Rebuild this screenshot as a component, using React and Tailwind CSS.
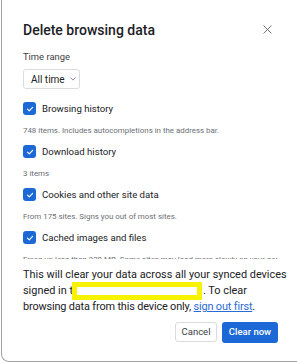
import React from "react";

function Check() {
  return (
    <span className="flex h-[13px] w-[13px] shrink-0 items-center justify-center rounded-[3px] bg-[#1b68d6]">
      <svg width="8" height="8" viewBox="0 0 12 12" fill="none">
        <path d="M2.2 6.3 L4.9 8.9 L9.9 3.4" stroke="white" strokeWidth="1.7" strokeLinecap="round" strokeLinejoin="round" />
      </svg>
    </span>
  );
}

function Item({ label, desc }) {
  return (
    <div className="flex flex-col">
      <div className="flex h-[13px] items-center gap-[6px]">
        <Check />
        <span className="whitespace-nowrap text-[9.6px] leading-[13px] text-[#202124]">{label}</span>
      </div>
      <div className="mb-[8px] mt-[10px] h-[12px] whitespace-nowrap text-[7.9px] leading-[12px] text-[#6b6f74]">{desc}</div>
    </div>
  );
}

export default function App() {
  return (
    <div className="h-[364px] w-[297px] overflow-hidden bg-white" style={{ fontFamily: 'Roboto, Arial, sans-serif' }}>
      <div className="ml-px flex h-[362px] w-[320px] flex-col rounded-bl-[8px] border-b border-l border-[#a3a3a3] bg-white">
        <div className="flex h-[40px] w-[295px] items-end justify-between pl-[21px] pr-[25px]">
          <span className="h-[20px] text-[14px] font-medium leading-[20px] text-[#202124]">Delete browsing data</span>
          <svg width="9" height="9" viewBox="0 0 10 10" className="mb-[6px]">
            <path d="M0.6 0.6 L9.4 9.4 M9.4 0.6 L0.6 9.4" stroke="#5f6368" strokeWidth="1" />
          </svg>
        </div>
        <div className="mt-[10px] h-[14px] pl-[21px] text-[9.4px] leading-[14px] text-[#3c4043]">Time range</div>
        <div className="mt-[5px] pl-[21px]">
          <div className="flex h-[20px] w-[57px] items-center gap-[5px] rounded-[3px] border border-[#dadce0] pl-[7px] text-[10px] text-[#202124]">
            All time
            <svg width="6" height="4" viewBox="0 0 8 5">
              <path d="M0.6 0.6 L4 4 L7.4 0.6" stroke="#5f6368" strokeWidth="1" fill="none" />
            </svg>
          </div>
        </div>
        <div className="mt-[6px] flex h-[164px] w-[276px] overflow-hidden">
          <div className="flex flex-1 flex-col pl-[21px] pt-[7px]">
            <Item label="Browsing history" desc="748 items. Includes autocompletions in the address bar." />
            <Item label="Download history" desc="3 items" />
            <Item label="Cookies and other site data" desc="From 175 sites. Signs you out of most sites." />
            <Item label="Cached images and files" desc="Frees up less than 320 MB. Some sites may load more slowly on your next visit." />
          </div>
          <div className="flex w-[10px] shrink-0 flex-col items-center pt-[8px]">
            <svg width="5" height="3" viewBox="0 0 6 4"><path d="M0 4 L3 0 L6 4 Z" fill="#a0a0a0" /></svg>
            <div className="mt-[4px] h-[62px] w-[5px] rounded-full bg-[#8d8d8d]" />
            <div className="flex-1" />
            <svg width="5" height="3" viewBox="0 0 6 4" className="mb-[7px]"><path d="M0 0 L3 4 L6 0 Z" fill="#8d8d8d" /></svg>
          </div>
        </div>
        <div className="mt-[9px] w-[295px] pl-[21px] text-[10.9px] leading-[14px] text-[#202124]">
          <div className="whitespace-nowrap">This will clear your data across all your synced devices</div>
          <div className="flex items-center whitespace-nowrap">
            <span>signed in t</span>
            <span className="-ml-px flex h-[18px] w-[130px] items-center bg-[#f7f300] px-[5px]">
              <span className="h-[8px] w-full bg-white" />
            </span>
            <span className="ml-px">. To clear</span>
          </div>
          <div className="whitespace-nowrap tracking-[-0.15px]">
            browsing data from this device only, <span className="text-[#2a6bd6] underline decoration-[#2a6bd6]">sign out first</span>.
          </div>
        </div>
        <div className="mt-[8px] flex w-[295px] justify-end gap-[5px] pr-[19px]">
          <button className="h-[20px] w-[42px] rounded-[3px] border border-[#dadce0] bg-white text-[9.5px] text-[#3c4043]">Cancel</button>
          <button className="h-[21px] w-[56px] rounded-[3px] bg-[#1b68d6] text-[9.5px] font-medium text-white">Clear now</button>
        </div>
      </div>
    </div>
  );
}
